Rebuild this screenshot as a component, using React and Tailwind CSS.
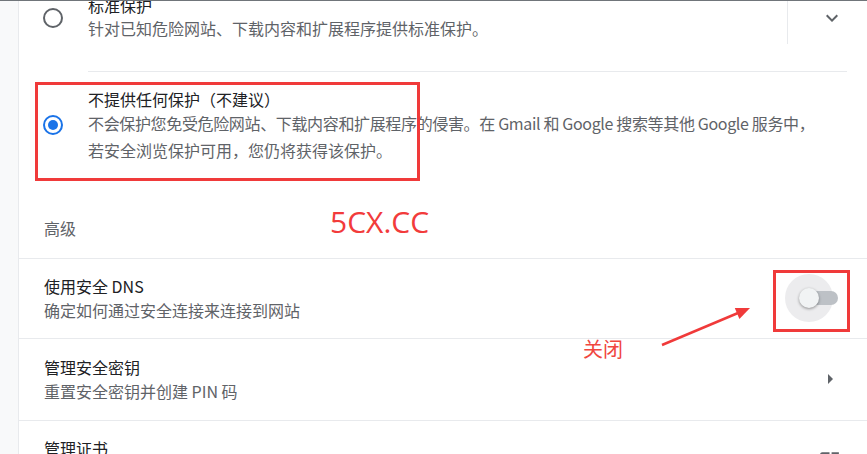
function Radio({ checked }) {
  return checked ? (
    <div className="w-[20px] h-[20px] rounded-full border-2 border-[#1a73e8] flex items-center justify-center flex-none">
      <div className="w-[10px] h-[10px] rounded-full bg-[#1a73e8]"></div>
    </div>
  ) : (
    <div className="w-[20px] h-[20px] rounded-full border-2 border-[#5f6368] flex-none"></div>
  );
}

function Toggle() {
  return (
    <div className="relative w-[53px] h-[48px] flex-none">
      <div className="absolute left-0 top-0 w-[48px] h-[48px] rounded-full bg-[#ececee]"></div>
      <div className="absolute left-[18px] top-[17px] w-[35px] h-[14px] rounded-full bg-[#bdc1c6]"></div>
      <div className="absolute left-[14px] top-[14px] w-[20px] h-[20px] rounded-full bg-[#f1f3f4] shadow-[0_1px_3px_rgba(0,0,0,0.4)]"></div>
    </div>
  );
}

export default function App() {
  return (
    <div
      className="relative w-[867px] h-[454px] overflow-hidden bg-white flex border-t border-[#70757a]"
      style={{ fontFamily: '"Noto Sans CJK SC", "Noto Sans", sans-serif' }}
    >
      <div className="w-[19px] flex-none bg-[#f8f9fa] border-r border-[#e8eaed]"></div>

      <div className="flex-1 flex flex-col text-[16px]">
        {/* standard protection (cut off) */}
        <div className="-mt-[23px] h-[80px] flex items-center flex-none">
          <div className="pl-[24px]">
            <Radio />
          </div>
          <div className="ml-[25px] flex-1">
            <div className="leading-[20px] text-[#202124]">标准保护</div>
            <div className="leading-[26px] text-[#5f6368]">针对已知危险网站、下载内容和扩展程序提供标准保护。</div>
          </div>
          <div className="h-[52px] w-[80px] border-l border-[#e8eaed] flex items-center pl-[32px]">
            <svg width="24" height="24" viewBox="0 0 24 24" fill="#5f6368">
              <path d="M16.59 8.59L12 13.17 7.41 8.59 6 10l6 6 6-6z" />
            </svg>
          </div>
        </div>
        <div className="mt-[13px] ml-[69px] mr-[20px] h-px bg-[#e8eaed] flex-none"></div>

        {/* no protection */}
        <div className="flex items-start pt-[17px] flex-none">
          <div className="pl-[24px] mt-[26px]">
            <Radio checked />
          </div>
          <div className="ml-[25px] whitespace-nowrap">
            <div className="leading-[21px] text-[#202124]">不提供任何保护（不建议）</div>
            <div className="leading-[27px] text-[#5f6368]">
              <span className="tracking-[-0.35px]">不会保护您免受危险网站、下载内容和扩展程序的侵害。在 Gmail 和 Google 搜索等其他 Google 服务中，</span>
              <br />
              若安全浏览保护可用，您仍将获得该保护。
            </div>
          </div>
        </div>

        <div className="pl-[25px] pt-[52px] pb-[18px] leading-[24px] text-[#5f6368] border-b border-[#e8eaed] flex-none">高级</div>

        {/* secure DNS */}
        <div className="flex items-center pt-[15px] pb-[16px] border-b border-[#e8eaed] flex-none">
          <div className="pl-[25px] flex-1">
            <div className="leading-[24px] text-[#202124]">使用安全 DNS</div>
            <div className="leading-[24px] text-[#5f6368]">确定如何通过安全连接来连接到网站</div>
          </div>
          <div className="mr-[29px]">
            <Toggle />
          </div>
        </div>

        {/* security keys */}
        <div className="flex items-center pt-[16px] pb-[17px] border-b border-[#e8eaed] flex-none">
          <div className="pl-[25px] flex-1">
            <div className="leading-[24px] text-[#202124]">管理安全密钥</div>
            <div className="leading-[24px] text-[#5f6368]">重置安全密钥并创建 PIN 码</div>
          </div>
          <svg className="mr-[25px]" width="24" height="24" viewBox="0 0 24 24" fill="#5f6368">
            <path d="M10 17l5-5-5-5v10z" />
          </svg>
        </div>

        {/* certificates */}
        <div className="flex items-start pt-[15px] flex-none">
          <div className="pl-[25px] flex-1">
            <div className="leading-[24px] text-[#202124]">管理证书</div>
          </div>
          <svg className="mr-[25px] mt-[13px]" width="25" height="25" viewBox="0 0 24 24" fill="#5f6368">
            <path d="M19 19H5V5h7V3H5c-1.11 0-2 .9-2 2v14c0 1.1.89 2 2 2h14c1.1 0 2-.9 2-2v-7h-2v7zM14 3v2h3.59l-9.83 9.83 1.41 1.41L19 6.41V10h2V3h-7z" />
          </svg>
        </div>
      </div>

      {/* annotations */}
      <div className="absolute left-[35px] top-[81px] w-[385px] h-[99px] border-[3px] border-[#f03a3a]"></div>
      <div
        className="absolute left-[330px] top-[206px] text-[30px] leading-[30px] text-[#f23b3b]"
        style={{ fontFamily: '"Open Sans", sans-serif' }}
      >
        5CX.CC
      </div>
      <div className="absolute left-[773px] top-[269px] w-[77px] h-[62px] border-[3px] border-[#f03a3a]"></div>
      <svg className="absolute left-[650px] top-[294px]" width="110" height="60" viewBox="0 0 110 60">
        <line x1="12" y1="50" x2="88" y2="18" stroke="#f03a3a" strokeWidth="2.5" />
        <polygon points="100,13 89.4,23.9 84.8,12.9" fill="#f03a3a" />
      </svg>
      <div className="absolute left-[583px] top-[338px] text-[20px] leading-[20px] text-[#f0473f]">关闭</div>
    </div>
  );
}
